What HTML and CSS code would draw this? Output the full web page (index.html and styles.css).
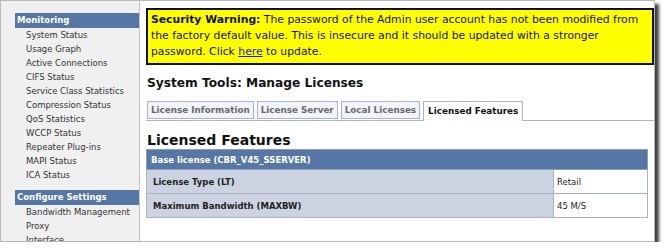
FILE: index.html
```html
<!doctype html>
<html lang="en">
  <head>
    <meta charset="utf-8" />
    <title>System Tools: Manage Licenses</title>
    <link rel="stylesheet" href="styles.css">
  </head>
  <body>
    <div class="frame">
      <nav class="sidebar">
        <div class="group">
          <div class="group-title">Monitoring</div>
          <a href="#">System Status</a>
          <a href="#">Usage Graph</a>
          <a href="#">Active Connections</a>
          <a href="#">CIFS Status</a>
          <a href="#">Service Class Statistics</a>
          <a href="#">Compression Status</a>
          <a href="#">QoS Statistics</a>
          <a href="#">WCCP Status</a>
          <a href="#">Repeater Plug-ins</a>
          <a href="#">MAPI Status</a>
          <a href="#">ICA Status</a>
        </div>
        <div class="group">
          <div class="group-title">Configure Settings</div>
          <a href="#">Bandwidth Management</a>
          <a href="#">Proxy</a>
          <a href="#">Interface</a>
        </div>
      </nav>
      <main class="content">
        <div class="warning">
          <b>Security Warning:</b> The password of the Admin user account has not been modified from
          the factory default value. This is insecure and it should be updated with a stronger
          password. Click <a href="#">here</a> to update.
        </div>
        <h1>System Tools: Manage Licenses</h1>
        <div class="tabs">
          <span class="tab">License Information</span>
          <span class="tab">License Server</span>
          <span class="tab">Local Licenses</span>
          <span class="tab active">Licensed Features</span>
        </div>
        <h2>Licensed Features</h2>
        <table class="features">
          <tr>
            <th colspan="2">Base license (CBR_V45_SSERVER)</th>
          </tr>
          <tr>
            <td class="label">License Type (LT)</td>
            <td class="value">Retail</td>
          </tr>
          <tr>
            <td class="label">Maximum Bandwidth (MAXBW)</td>
            <td class="value">45 M/S</td>
          </tr>
        </table>
      </main>
    </div>
  </body>
</html>
```

FILE: styles.css
```css
body {
  margin: 0;
  background: #ffffff;
  font-family: "DejaVu Sans", Verdana, sans-serif;
  color: #222;
}
.frame {
  display: flex;
  width: 655px;
  height: 242px;
  box-sizing: border-box;
  border: 1px solid #b8b8b8;
  box-shadow: 4px 4px 3px rgba(0, 0, 0, 0.75);
  overflow: hidden;
  background: #fff;
}
.sidebar {
  width: 139px;
  flex: none;
  background: #f0f0f0;
  border-right: 1px solid #c4c4c4;
  padding: 12px 0 0 14px;
  box-sizing: border-box;
}
.group {
  display: flex;
  flex-direction: column;
  margin-bottom: 8px;
}
.group-title {
  background: #5677a6;
  color: #fff;
  font-weight: bold;
  font-size: 8.5px;
  height: 15px;
  line-height: 15px;
  padding-left: 2px;
}
.group a {
  color: #333;
  text-decoration: none;
  font-size: 8.5px;
  line-height: 14px;
  padding-left: 11px;
}
.content {
  flex: 1;
  padding: 7px 0 0 6px;
}
.warning {
  width: 490px;
  background: #ffff00;
  border: 2px solid #111;
  padding: 2px 11px 3px 3px;
  font-size: 10.8px;
  line-height: 16px;
  color: #111;
}
.warning a {
  color: #1c1ccc;
}
h1 {
  font-size: 12.2px;
  margin: 11px 0 0 1px;
  color: #111;
}
.tabs {
  display: flex;
  gap: 3px;
  margin-top: 11px;
  padding-left: 1px;
  border-bottom: 1px solid #a7b5c9;
  align-items: flex-end;
}
.tab {
  font-size: 8.8px;
  font-weight: bold;
  color: #6a6a6a;
  background: #f1f4f8;
  border: 1px solid #a7b5c9;
  padding: 3px 3px;
  margin-bottom: 1px;
}
.tab.active {
  background: #fff;
  color: #111;
  border-bottom: none;
  padding: 4px 4px 5px;
  margin-bottom: -1px;
}
h2 {
  font-size: 14px;
  margin: 11px 0 0 1px;
  line-height: 17px;
  color: #111;
}
.features {
  width: 502px;
  border-collapse: collapse;
  font-size: 8.5px;
}
.features th {
  background: #5677a6;
  color: #fff;
  text-align: left;
  height: 19px;
  padding: 0 4px;
  border: 1px solid #8d9fb8;
}
.features td {
  height: 23px;
  padding: 0 6px;
  border: 1px solid #a9b2bf;
}
.features .label {
  background: #ccd3e0;
  font-weight: bold;
}
.features .value {
  width: 84px;
  background: #fff;
  padding-left: 3px;
}
```
